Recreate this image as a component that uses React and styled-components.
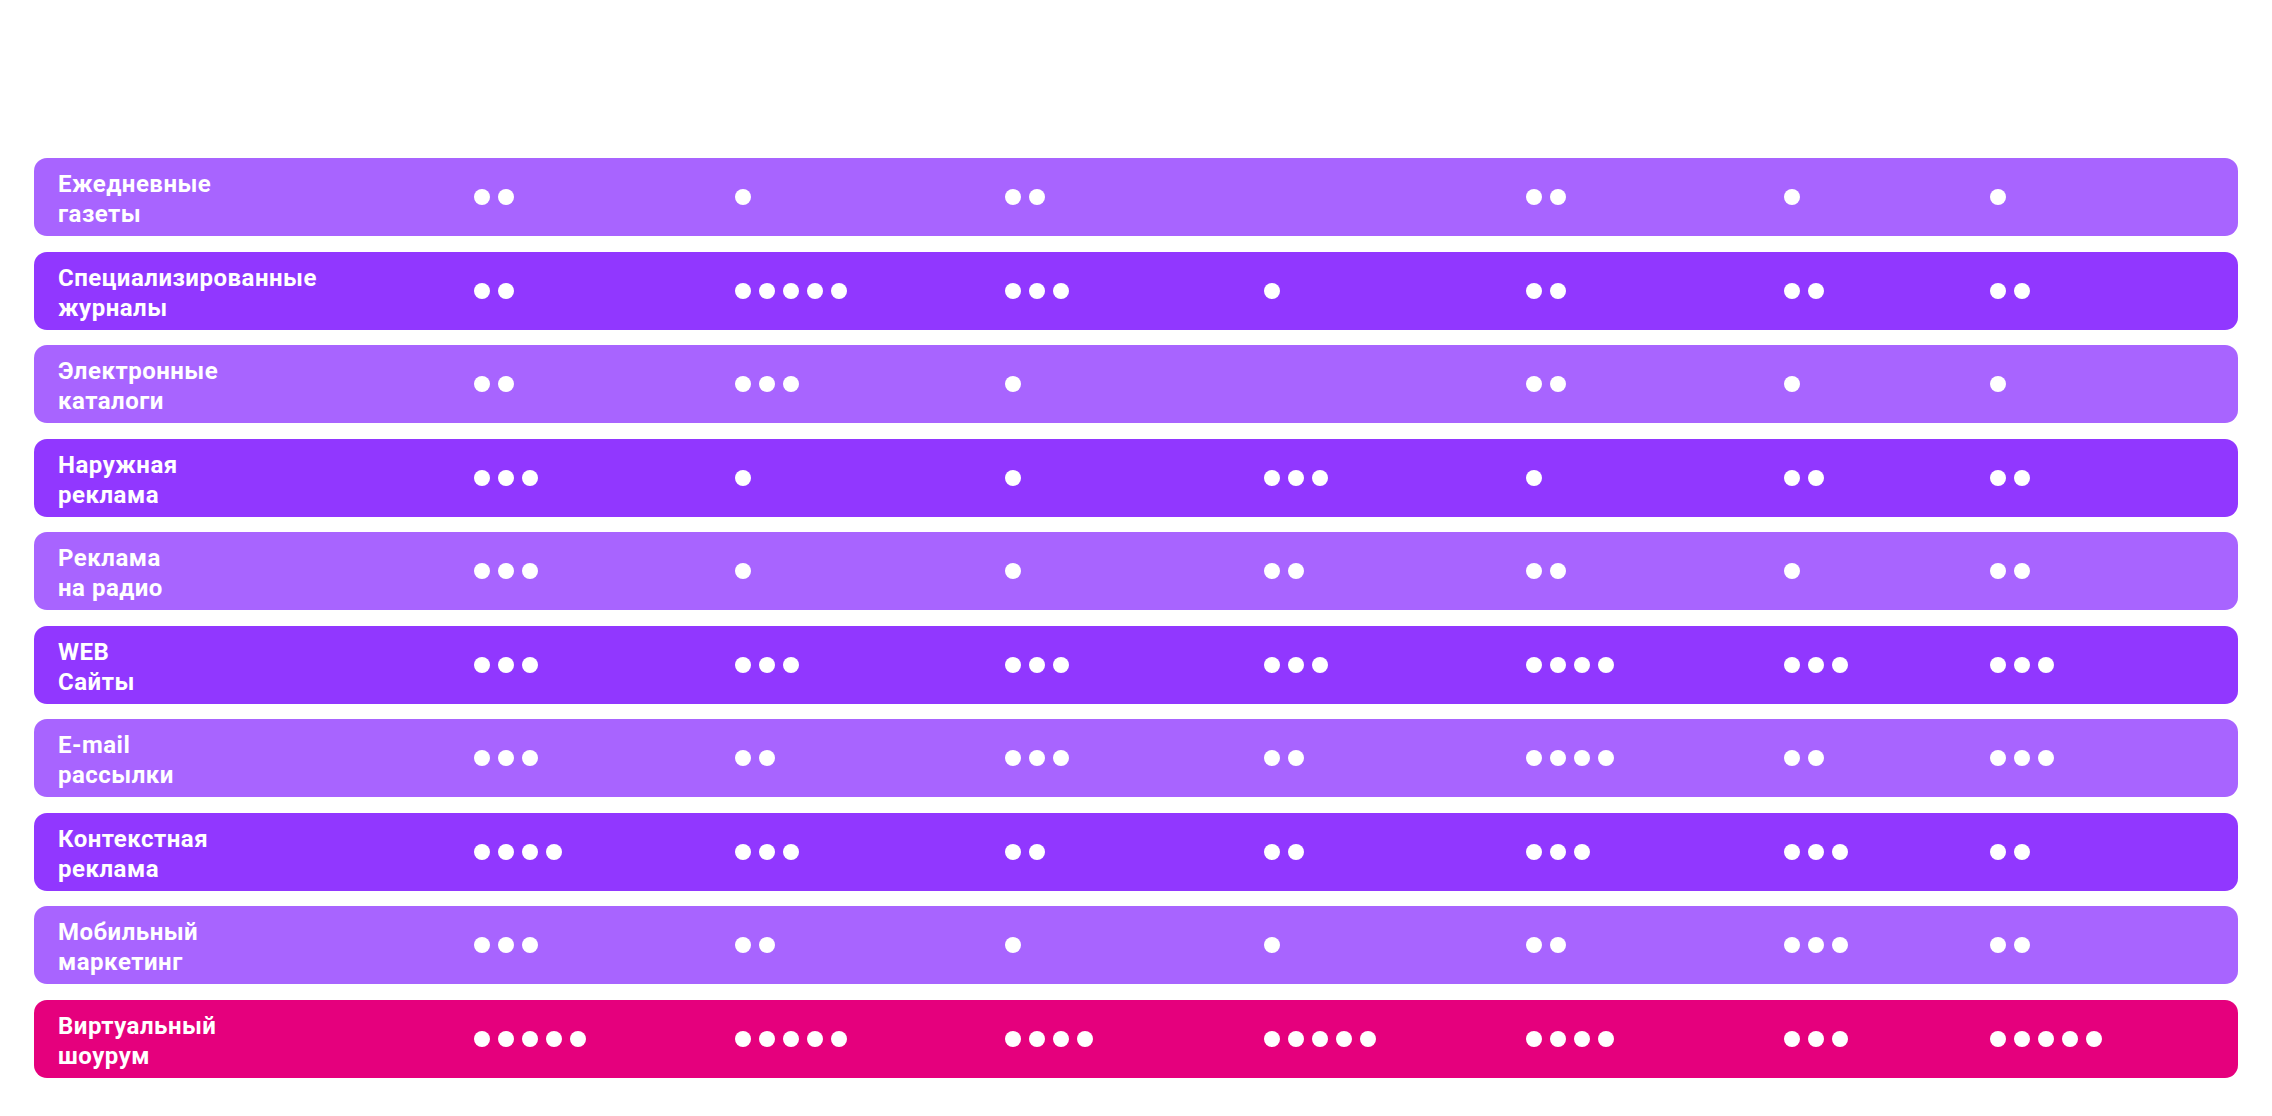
import React from 'react'
import styled, { createGlobalStyle } from 'styled-components'

const GlobalStyle = createGlobalStyle`
  html, body {
    margin: 0;
    padding: 0;
    background: #fff;
    font-family: Roboto, 'Liberation Sans', sans-serif;
  }
`

const COLORS = {
  light: '#A864FF',
  dark: '#9137FF',
  accent: '#E5007D'
}

// column widths measured from the layout, last column takes the rest
const COLUMNS = '440px 261px 269.5px 259.5px 262px 258px 205.5px 1fr'

const Page = styled.div`
  padding: 158px 34px 38px;
  display: flex;
  flex-direction: column;
  gap: 15.5px;
`

const Row = styled.div`
  display: grid;
  grid-template-columns: ${COLUMNS};
  grid-template-rows: 78px;
  align-items: center;
  border-radius: 13px;
  background: ${({ tone }) => COLORS[tone]};
  color: #fff;
`

const Label = styled.div`
  padding: 4px 0 0 24px;
  font-size: 24px;
  line-height: 30px;
  font-weight: 700;
  letter-spacing: 0.5px;
  white-space: nowrap;
`

const Cell = styled.div`
  display: flex;
  align-items: center;
  gap: 8px;
`

const Dot = styled.span`
  display: block;
  width: 16px;
  height: 16px;
  border-radius: 50%;
  background: #fff;
`

const rows = [
  { title: ['Ежедневные', 'газеты'], values: [2, 1, 2, 0, 2, 1, 1] },
  { title: ['Специализированные', 'журналы'], values: [2, 5, 3, 1, 2, 2, 2] },
  { title: ['Электронные', 'каталоги'], values: [2, 3, 1, 0, 2, 1, 1] },
  { title: ['Наружная', 'реклама'], values: [3, 1, 1, 3, 1, 2, 2] },
  { title: ['Реклама', 'на радио'], values: [3, 1, 1, 2, 2, 1, 2] },
  { title: ['WEB', 'Сайты'], values: [3, 3, 3, 3, 4, 3, 3] },
  { title: ['E-mail', 'рассылки'], values: [3, 2, 3, 2, 4, 2, 3] },
  { title: ['Контекстная', 'реклама'], values: [4, 3, 2, 2, 3, 3, 2] },
  { title: ['Мобильный', 'маркетинг'], values: [3, 2, 1, 1, 2, 3, 2] },
  { title: ['Виртуальный', 'шоурум'], values: [5, 5, 4, 5, 4, 3, 5], accent: true }
]

const Rating = ({ count }) => (
  <Cell>
    {Array.from({ length: count }).map((_, i) => <Dot key={i} />)}
  </Cell>
)

export default function App () {
  return (
    <>
      <GlobalStyle />
      <Page>
        {rows.map((row, i) => (
          <Row key={i} tone={row.accent ? 'accent' : i % 2 ? 'dark' : 'light'}>
            <Label>
              {row.title[0]}<br />{row.title[1]}
            </Label>
            {row.values.map((v, j) => <Rating key={j} count={v} />)}
            <div />
          </Row>
        ))}
      </Page>
    </>
  )
}
